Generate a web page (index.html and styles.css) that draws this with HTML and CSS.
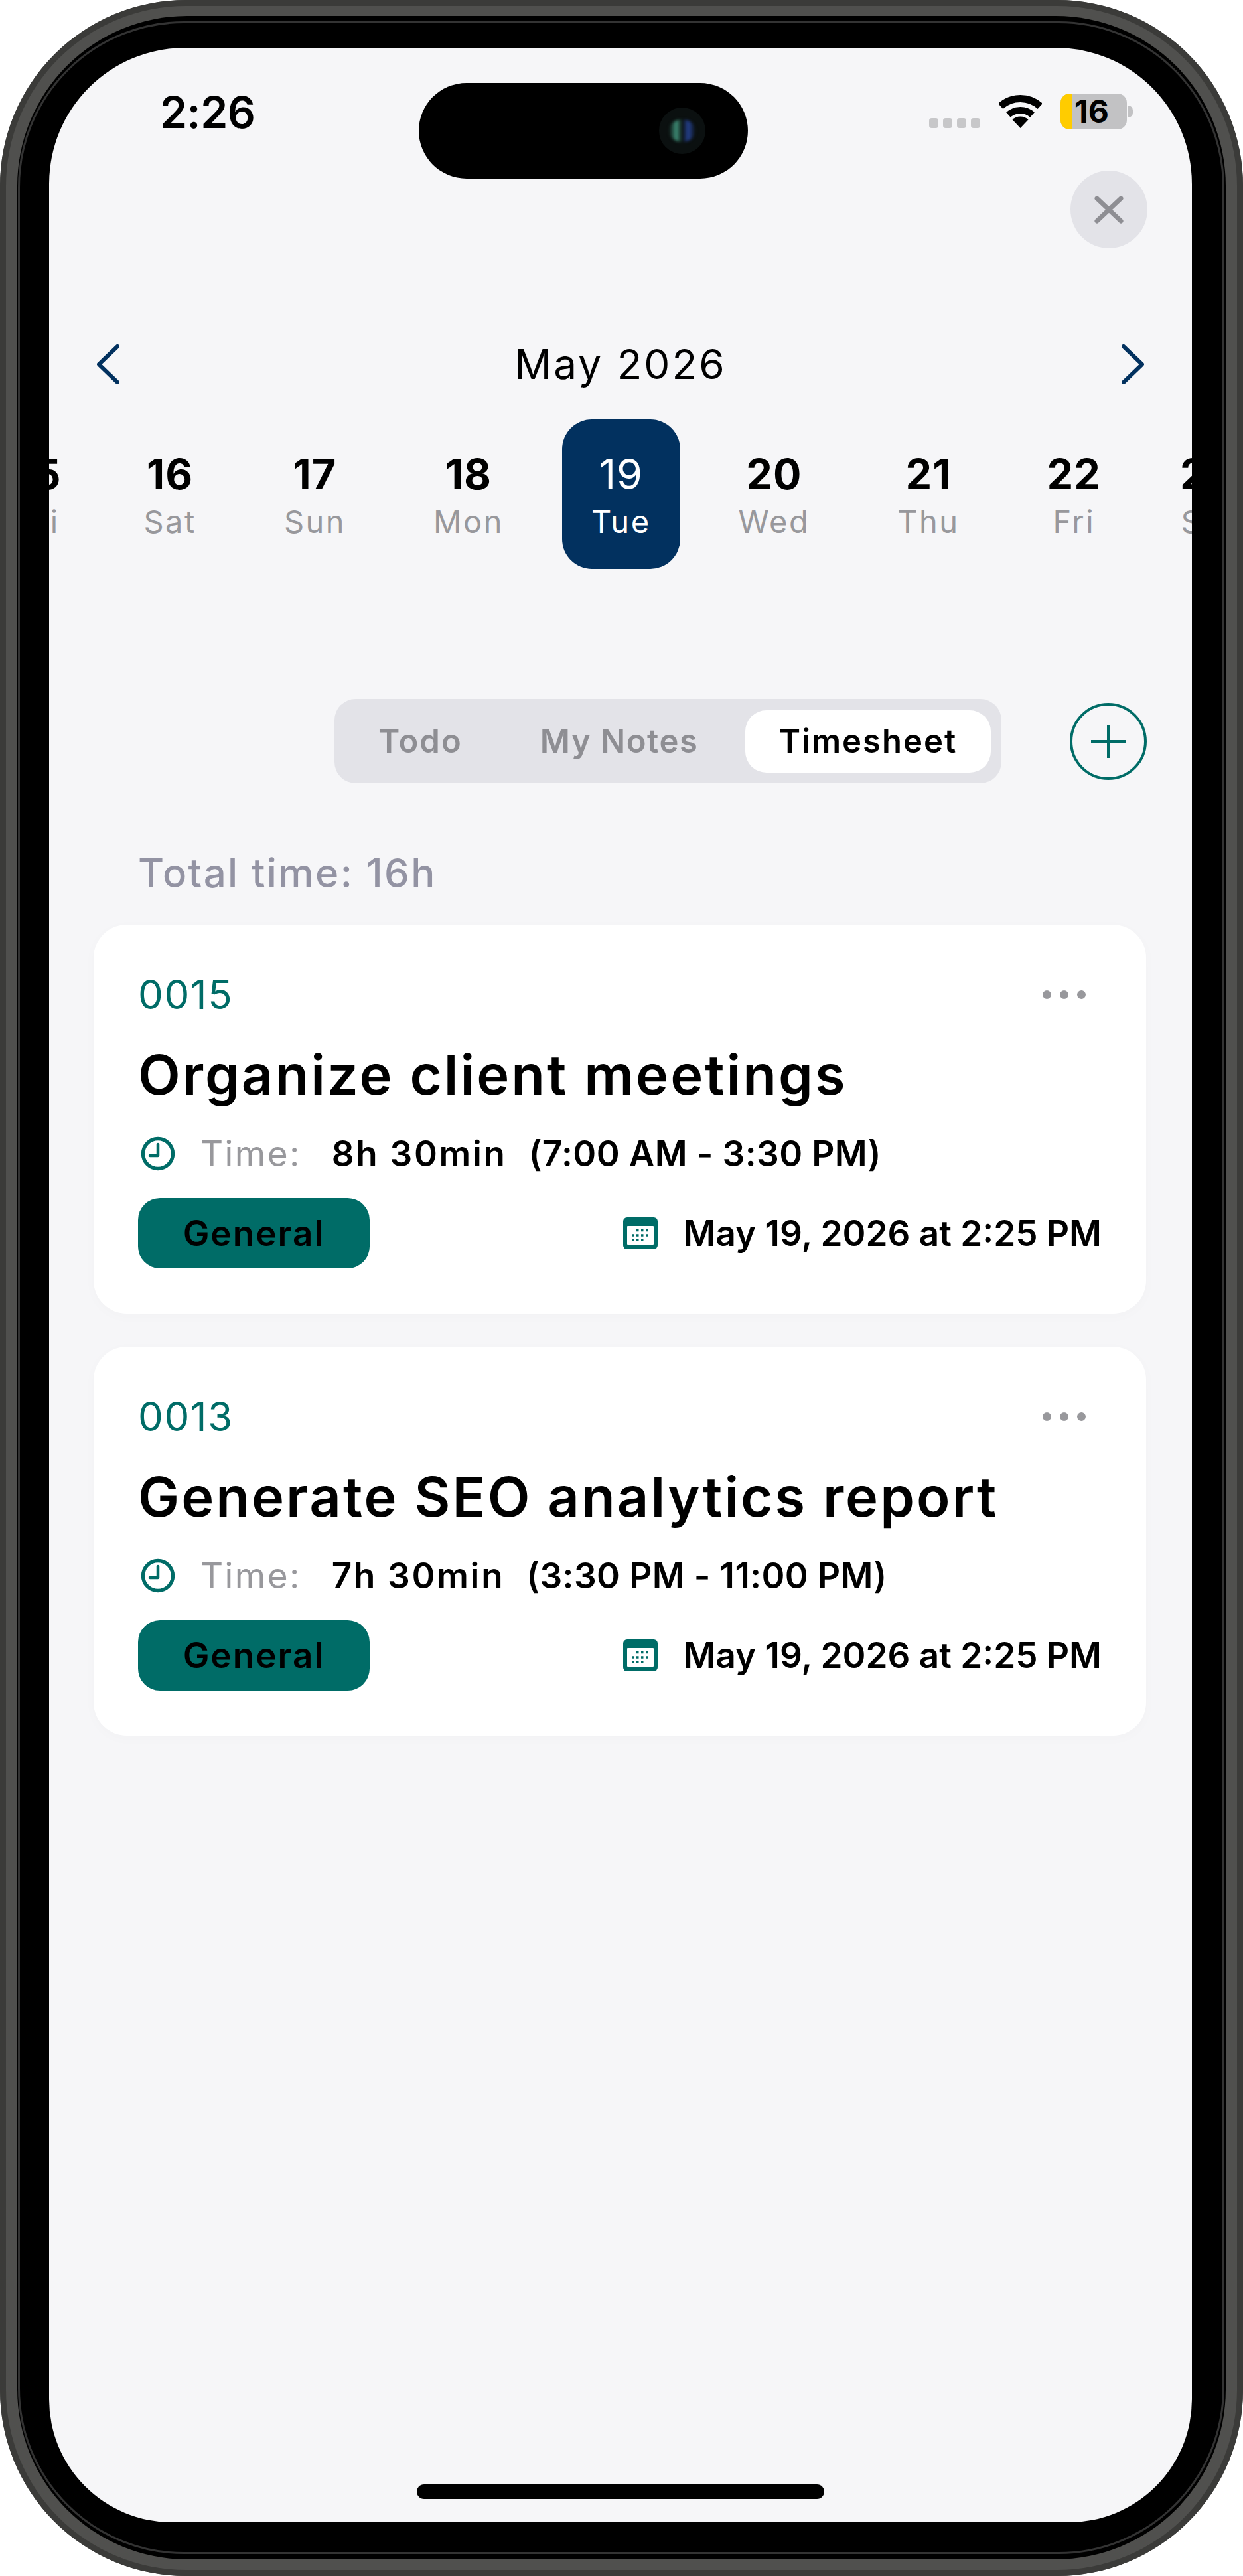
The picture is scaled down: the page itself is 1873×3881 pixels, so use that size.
FILE: index.html
```html
<!DOCTYPE html>
<html lang="en">

<head>
    <meta charset="UTF-8">
    <meta name="viewport" content="width=device-width, initial-scale=1.0">
    <title>Timesheet</title>
    <link rel="stylesheet" href="styles.css">
</head>

<body>
    <div class="phone">
        <div class="bezel">
            <div class="bezel-line">
                <div class="screen">
                    <div class="island">
                        <div class="camera">
                            <div class="lens"></div>
                        </div>
                    </div>

                    <div class="status-bar">
                        <span class="clock-time">2:26</span>
                        <div class="status-icons">
                            <div class="signal">
                                <span></span><span></span><span></span><span></span>
                            </div>
                            <svg class="wifi" width="65" height="50" viewBox="0 0 65 50">
                                <path d="M2.7 17A44.5 44.5 0 0 1 62.3 17" fill="none" stroke="#000" stroke-width="11" />
                                <path d="M14.5 30A27 27 0 0 1 50.5 30" fill="none" stroke="#000" stroke-width="10" />
                                <path d="M32.5 50L20.5 37.2A17.5 17.5 0 0 1 44.5 37.2Z" fill="#000" />
                            </svg>
                            <div class="battery">
                                <div class="battery-body">
                                    <span class="battery-level"></span>
                                    <span class="battery-text">16</span>
                                </div>
                                <span class="battery-nub"></span>
                            </div>
                        </div>
                    </div>

                    <div class="close-btn">
                        <svg width="44" height="42" viewBox="0 0 44 42">
                            <path d="M4 4L40 38M40 4L4 38" fill="none" stroke="#8e8e93" stroke-width="7" stroke-linecap="round" />
                        </svg>
                    </div>

                    <div class="month-row">
                        <svg width="34" height="60" viewBox="0 0 34 60">
                            <path d="M31 3L3 30L31 57" fill="none" stroke="#02315f" stroke-width="6" stroke-linecap="round" stroke-linejoin="round" />
                        </svg>
                        <span class="month-name">May 2026</span>
                        <svg width="34" height="60" viewBox="0 0 34 60">
                            <path d="M3 3L31 30L3 57" fill="none" stroke="#02315f" stroke-width="6" stroke-linecap="round" stroke-linejoin="round" />
                        </svg>
                    </div>

                    <div class="days">
                        <div class="day"><span class="day-num">15</span><span class="day-name">Fri</span></div>
                        <div class="day"><span class="day-num">16</span><span class="day-name">Sat</span></div>
                        <div class="day"><span class="day-num">17</span><span class="day-name">Sun</span></div>
                        <div class="day"><span class="day-num">18</span><span class="day-name">Mon</span></div>
                        <div class="day day-active"><span class="day-num">19</span><span class="day-name">Tue</span></div>
                        <div class="day"><span class="day-num">20</span><span class="day-name">Wed</span></div>
                        <div class="day"><span class="day-num">21</span><span class="day-name">Thu</span></div>
                        <div class="day"><span class="day-num">22</span><span class="day-name">Fri</span></div>
                        <div class="day"><span class="day-num">23</span><span class="day-name">Sat</span></div>
                    </div>

                    <div class="tabs-row">
                        <div class="tabs">
                            <span class="tab tab-todo">Todo</span>
                            <span class="tab tab-notes">My Notes</span>
                            <span class="tab tab-active">Timesheet</span>
                        </div>
                        <div class="add-btn">
                            <svg width="54" height="52" viewBox="0 0 54 52">
                                <path d="M27 1V51M1 26H53" fill="none" stroke="#006c67" stroke-width="4" />
                            </svg>
                        </div>
                    </div>

                    <p class="total-time">Total time: 16h</p>

                    <div class="cards">
                        <div class="card">
                            <div class="card-top">
                                <span class="card-id">0015</span>
                                <div class="dots"><span></span><span></span><span></span></div>
                            </div>
                            <h2 class="card-title">Organize client meetings</h2>
                            <div class="time-row">
                                <svg class="clock-icon" width="52" height="52" viewBox="0 0 52 52">
                                    <circle cx="26" cy="26" r="22.5" fill="none" stroke="#006c67" stroke-width="5.5" />
                                    <path d="M26 12V29H14" fill="none" stroke="#006c67" stroke-width="4.5" stroke-linecap="round" stroke-linejoin="round" />
                                </svg>
                                <span class="time-label">Time:</span>
                                <span class="time-value">8h 30min</span>
                                <span class="time-range">(7:00 AM - 3:30 PM)</span>
                            </div>
                            <div class="card-bottom">
                                <span class="badge">General</span>
                                <div class="card-date">
                                    <svg width="52" height="48" viewBox="0 0 52 48">
                                        <rect width="52" height="48" rx="6" fill="#006c67" />
                                        <rect x="6" y="13" width="40" height="28" rx="1" fill="#fff" />
                                        <path d="M20 19.5H38M13 27H38M13 34H32" fill="none" stroke="#006c67" stroke-width="3.5" stroke-dasharray="3.5 3.5" />
                                    </svg>
                                    <span>May 19, 2026 at 2:25 PM</span>
                                </div>
                            </div>
                        </div>

                        <div class="card">
                            <div class="card-top">
                                <span class="card-id">0013</span>
                                <div class="dots"><span></span><span></span><span></span></div>
                            </div>
                            <h2 class="card-title">Generate SEO analytics report</h2>
                            <div class="time-row">
                                <svg class="clock-icon" width="52" height="52" viewBox="0 0 52 52">
                                    <circle cx="26" cy="26" r="22.5" fill="none" stroke="#006c67" stroke-width="5.5" />
                                    <path d="M26 12V29H14" fill="none" stroke="#006c67" stroke-width="4.5" stroke-linecap="round" stroke-linejoin="round" />
                                </svg>
                                <span class="time-label">Time:</span>
                                <span class="time-value">7h 30min</span>
                                <span class="time-range">(3:30 PM - 11:00 PM)</span>
                            </div>
                            <div class="card-bottom">
                                <span class="badge">General</span>
                                <div class="card-date">
                                    <svg width="52" height="48" viewBox="0 0 52 48">
                                        <rect width="52" height="48" rx="6" fill="#006c67" />
                                        <rect x="6" y="13" width="40" height="28" rx="1" fill="#fff" />
                                        <path d="M20 19.5H38M13 27H38M13 34H32" fill="none" stroke="#006c67" stroke-width="3.5" stroke-dasharray="3.5 3.5" />
                                    </svg>
                                    <span>May 19, 2026 at 2:25 PM</span>
                                </div>
                            </div>
                        </div>
                    </div>

                    <div class="home-bar"></div>
                </div>
            </div>
        </div>
    </div>
</body>

</html>
```
FILE: styles.css
```css
* {
    box-sizing: border-box;
}

body {
    margin: 0;
    background-color: #fff;
    font-family: Inter, "Open Sans", sans-serif;
    color: #000;
}

.phone {
    width: 1873px;
    height: 3881px;
    padding: 24px 26px 25px;
    background-color: #50504e;
    border-radius: 280px;
    box-shadow: inset 0 0 0 9px #3b3b39;
}

.bezel {
    height: 100%;
    padding: 8px 2px 8px 1px;
    background-color: #000;
    border-radius: 256px;
}

.bezel-line {
    height: 100%;
    padding: 37px 46px 45px 44px;
    border: 3px solid #333;
    border-radius: 250px;
}

.screen {
    position: relative;
    display: flex;
    flex-direction: column;
    height: 100%;
    background-color: #f6f6f8;
    border-radius: 205px 205px 185px 185px;
    overflow: hidden;
}

/* sits over the status bar */
.island {
    position: absolute;
    top: 53px;
    left: 557px;
    display: flex;
    align-items: center;
    justify-content: flex-end;
    width: 496px;
    height: 144px;
    padding-right: 64px;
    background-color: #000;
    border-radius: 72px;
}

.camera {
    display: flex;
    align-items: center;
    justify-content: center;
    width: 70px;
    height: 70px;
    background-color: #0b1010;
    border-radius: 50%;
}

.lens {
    width: 40px;
    height: 34px;
    background: linear-gradient(90deg, #0b1010, #3f8f78 28%, #0b1010 50%, #24418f 72%, #0b1010);
    border-radius: 50%;
    filter: blur(2px);
}

.status-bar {
    display: flex;
    flex: none;
    justify-content: space-between;
    align-items: flex-start;
    height: 185px;
    padding: 64px 89px 0 167px;
}

.clock-time {
    font-size: 66px;
    line-height: 66px;
    font-weight: 600;
    letter-spacing: -0.5px;
}

.status-icons {
    display: flex;
    align-items: flex-end;
    gap: 28px;
    margin-top: 5px;
}

.signal {
    display: flex;
    gap: 7px;
    margin-bottom: 2px;
}

.signal span {
    width: 14px;
    height: 15px;
    background-color: #c7c7c9;
    border-radius: 4px;
}

.wifi {
    display: block;
    margin-bottom: 2px;
}

.battery {
    display: flex;
    align-items: center;
    gap: 2px;
}

.battery-body {
    display: flex;
    width: 100px;
    height: 54px;
    background-color: #c2c2c4;
    border-radius: 14px;
}

.battery-level {
    width: 17px;
    background-color: #ffcc00;
    border-radius: 14px 0 0 14px;
}

.battery-text {
    margin-left: 4px;
    font-size: 48px;
    line-height: 54px;
    font-weight: 700;
}

.battery-nub {
    width: 7px;
    height: 18px;
    background-color: #c2c2c4;
    border-radius: 0 9px 9px 0;
}

.close-btn {
    display: flex;
    flex: none;
    align-items: center;
    justify-content: center;
    align-self: flex-end;
    width: 116px;
    height: 117px;
    margin-right: 67px;
    background-color: #e3e3e8;
    border-radius: 50%;
}

.close-btn svg,
.add-btn svg {
    display: block;
}

.month-row {
    display: flex;
    flex: none;
    justify-content: space-between;
    align-items: center;
    height: 60px;
    margin-top: 145px;
    padding: 0 72px;
}

.month-name {
    font-size: 62px;
    line-height: 60px;
    font-weight: 400;
    letter-spacing: 3px;
}

.days {
    display: flex;
    flex: none;
    gap: 44px;
    height: 225px;
    margin: 53px 0 0 -95px;
}

.day {
    display: flex;
    flex: none;
    flex-direction: column;
    align-items: center;
    height: 225px;
    padding: 46px 44px 0;
    border-radius: 45px;
}

.day:first-child {
    margin-right: -8px;
}

.day:last-child {
    margin-left: -13px;
}

.day-num {
    font-size: 63px;
    line-height: 72px;
    font-weight: 700;
    letter-spacing: 1px;
}

.day-name {
    margin-top: 6px;
    font-size: 47px;
    line-height: 60px;
    letter-spacing: 2.5px;
    color: #98989c;
}

.day-active {
    background-color: #02315f;
}

.day-active .day-num {
    font-weight: 400;
    color: #fff;
}

.day-active .day-name {
    color: #fff;
}

.tabs-row {
    display: flex;
    flex: none;
    justify-content: flex-end;
    align-items: center;
    gap: 103px;
    margin-top: 196px;
    padding-right: 68px;
}

.tabs {
    display: flex;
    align-items: center;
    width: 1005px;
    height: 127px;
    padding: 0 16px 0 66px;
    background-color: #e3e3e8;
    border-radius: 32px;
}

.tab {
    font-size: 49px;
    line-height: 94px;
    font-weight: 600;
    letter-spacing: 2px;
    color: #8e8e93;
}

.tab-notes {
    margin-left: 117px;
    letter-spacing: 1.5px;
}

.tab-active {
    width: 370px;
    margin-left: auto;
    background-color: #fff;
    border-radius: 32px;
    color: #000;
    text-align: center;
}

.add-btn {
    display: flex;
    align-items: center;
    justify-content: center;
    width: 116px;
    height: 116px;
    border: 4px solid #006c67;
    border-radius: 50%;
}

.total-time {
    flex: none;
    margin: 95px 0 0;
    padding-left: 134px;
    font-size: 60px;
    line-height: 80px;
    font-weight: 500;
    letter-spacing: 2.4px;
    color: #9393a3;
}

.cards {
    display: flex;
    flex: none;
    flex-direction: column;
    gap: 50px;
    margin: 38px 69px 0 67px;
}

.card {
    height: 586px;
    padding: 75px 67px 0;
    background-color: #fff;
    border-radius: 50px;
    box-shadow: 0 4px 20px rgba(0, 0, 0, 0.02);
}

.card-top {
    display: flex;
    justify-content: space-between;
    align-items: center;
    height: 60px;
}

.card-id {
    font-size: 60px;
    line-height: 60px;
    letter-spacing: 1.7px;
    color: #006c67;
}

.dots {
    display: flex;
    gap: 13px;
    margin-right: 24px;
}

.dots span {
    width: 13px;
    height: 13px;
    background-color: #98989c;
    border-radius: 50%;
}

.card-title {
    margin: 41px 0 0;
    font-size: 83px;
    line-height: 100px;
    font-weight: 600;
    letter-spacing: 3px;
}

.time-row {
    display: flex;
    align-items: center;
    height: 60px;
    margin-top: 39px;
    font-size: 53px;
    line-height: 60px;
}

.clock-icon {
    flex: none;
    margin-left: 4px;
}

.time-label {
    margin-left: 38px;
    letter-spacing: 2.4px;
    color: #98989c;
}

.time-value {
    margin-left: 46px;
    font-weight: 600;
    letter-spacing: 2.7px;
}

.time-range {
    margin-left: 33px;
    font-weight: 600;
    letter-spacing: 0.4px;
}

.card-bottom {
    display: flex;
    justify-content: space-between;
    align-items: center;
    margin-top: 37px;
}

.badge {
    width: 349px;
    height: 106px;
    background-color: #006c67;
    border-radius: 33px;
    font-size: 53px;
    line-height: 106px;
    font-weight: 600;
    letter-spacing: 2px;
    text-align: center;
}

.card-date {
    display: flex;
    align-items: center;
    gap: 39px;
    font-size: 53px;
    line-height: 60px;
    font-weight: 600;
}

.home-bar {
    flex: none;
    width: 614px;
    height: 22px;
    margin: auto 0 35px 554px;
    background-color: #000;
    border-radius: 11px;
}
```
